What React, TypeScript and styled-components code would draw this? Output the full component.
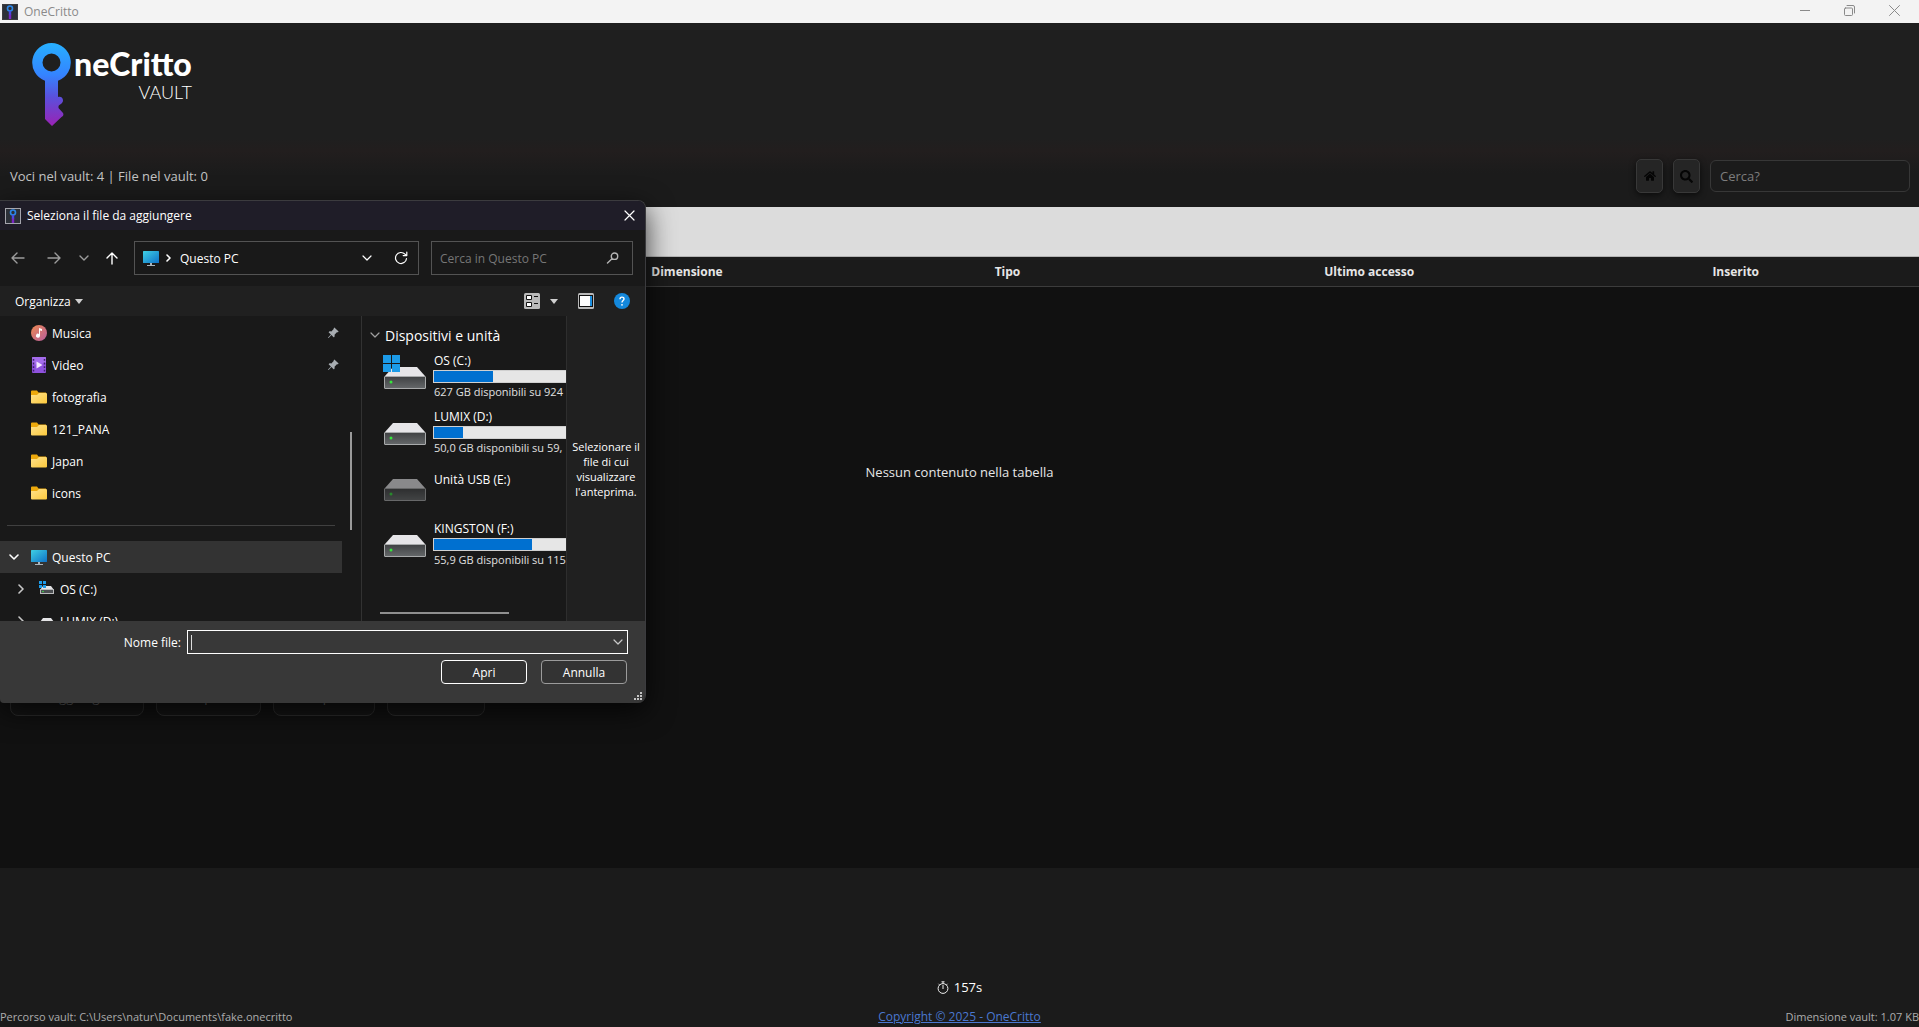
import React, { useId } from "react";
import styled, { createGlobalStyle } from "styled-components";
import { FaHome, FaSearch } from "react-icons/fa";
import { BsPinAngleFill } from "react-icons/bs";

const GlobalStyle = createGlobalStyle`
  *, *::before, *::after { box-sizing: border-box; }
  body {
    margin: 0;
    background: #1b1b1b;
    color: #fff;
    font-family: "Open Sans", "Noto Sans", sans-serif;
    font-size: 12px;
  }
  button, input { font: inherit; color: inherit; }
  button { padding: 0; border: 0; background: none; cursor: pointer; }
  svg { display: block; flex: none; }
`;

/* ---------- main window ---------- */

const Window = styled.div`
  position: relative;
  display: flex;
  flex-direction: column;
  min-height: 100vh;
  overflow: hidden;
`;

const TitleBar = styled.div`
  display: flex;
  align-items: center;
  justify-content: space-between;
  height: 23px;
  padding: 0 2px;
  background: #f3f3f3;
  color: #8a8a8a;
`;

const AppName = styled.div`
  display: flex;
  align-items: center;
  gap: 6px;
`;

const WindowControls = styled.div`
  display: flex;
  align-self: flex-start;
`;

const WindowButton = styled.button`
  display: grid;
  place-items: center;
  width: 45px;
  height: 21px;
`;

const Header = styled.header`
  display: flex;
  flex-direction: column;
  justify-content: space-between;
  height: 184px;
  padding: 19px 9px 14px 10px;
  background: linear-gradient(#1f1f1f 0 115px, #221e1e 128px, #1b1b1b 150px);
`;

const Brand = styled.div`
  display: flex;
  gap: 3px;
  padding-left: 22px;
`;

const BrandText = styled.div`
  display: flex;
  flex-direction: column;
  align-items: flex-end;
  padding-top: 4px;
  font-family: Lato, sans-serif;
`;

const BrandName = styled.span`
  font-size: 32px;
  font-weight: 900;
  line-height: 36px;
`;

const BrandSub = styled.span`
  font-size: 18px;
  font-weight: 300;
  line-height: 20px;
`;

const Toolbar = styled.div`
  display: flex;
  align-items: center;
  justify-content: space-between;
`;

const Counter = styled.span`
  color: #c4c4c4;
  font-size: 13px;
`;

const Tools = styled.div`
  display: flex;
  align-items: center;
  gap: 10px;
`;

const ToolButton = styled.button`
  display: grid;
  place-items: center;
  width: 27px;
  height: 34px;
  border: 1px solid #383838;
  border-radius: 5px;
  background: #252525;
  color: #050505;
  box-shadow: 0 2px 6px rgba(0, 0, 0, 0.6);
`;

const SearchBox = styled.input`
  width: 200px;
  height: 32px;
  padding: 0 9px;
  border: 1px solid #373737;
  border-radius: 6px;
  background: #1b1b1b;
  font-size: 13px;
  outline: 0;
  &::placeholder { color: #7d7d7d; opacity: 1; }
`;

const Strip = styled.div`
  height: 50px;
  background: #dcdcdc;
  border-bottom: 1px solid #b4b4b4;
`;

const Main = styled.main`
  flex: 1;
  background: #111;
`;

const Table = styled.table`
  width: 100%;
  table-layout: fixed;
  border-collapse: collapse;
  color: #e6e6e6;
  font-size: 13px;
`;

const Column = styled.col<{ $share: number }>`
  width: ${(p) => p.$share}%;
`;

const HeadCell = styled.th`
  height: 29px;
  padding: 0;
  background: #1b1b1b;
  border-bottom: 1px solid #3c3c3c;
  font-size: 12px;
  font-weight: 700;
  text-align: center;
`;

const EmptyCell = styled.td`
  height: 372px;
  padding: 0;
  text-align: center;
`;

const Actions = styled.div`
  display: flex;
  gap: 12px;
  padding: 22px 10px;
`;

const ActionButton = styled.button<{ $width: number }>`
  width: ${(p) => p.$width}px;
  height: 36px;
  padding-bottom: 2px;
  border: 1px solid #2c2c2c;
  border-radius: 8px;
  background: #151515;
  color: #666;
  font-size: 13px;
`;

const Footer = styled.footer`
  display: flex;
  flex-direction: column;
  justify-content: flex-end;
  height: 159px;
  gap: 12px;
  background: #1b1b1b;
`;

const Timer = styled.div`
  display: flex;
  align-items: center;
  justify-content: center;
  gap: 5px;
  font-size: 13px;
  line-height: 18px;
`;

const StatusRow = styled.div`
  display: grid;
  grid-template-columns: 1fr auto 1fr;
  padding-bottom: 1px;
  color: #adadad;
  font-size: 11px;
  line-height: 18px;
`;

const StatusEnd = styled.span`
  text-align: right;
`;

const Copyright = styled.a`
  color: #4a78d0;
  font-size: 12px;
  text-decoration: underline;
`;

/* ---------- file dialog ---------- */

const Dialog = styled.section`
  position: absolute;
  top: 200px;
  left: 0;
  width: 646px;
  border: 1px solid #3b3b3e;
  border-left: 0;
  border-bottom: 0;
  border-radius: 0 8px 8px 4px;
  background: #191919;
  box-shadow: 0 8px 28px rgba(0, 0, 0, 0.75);
  overflow: hidden;
`;

const DialogTitle = styled.div`
  display: flex;
  align-items: center;
  justify-content: space-between;
  height: 29px;
  padding: 0 10px 0 5px;
  background: #1f1d28;
`;

const DialogName = styled.h1`
  display: flex;
  align-items: center;
  gap: 6px;
  margin: 0;
  font-size: 12px;
  font-weight: 400;
`;

const NavBar = styled.div`
  display: flex;
  align-items: center;
  height: 56px;
  padding: 0 12px 0 11px;
`;

const NavButtons = styled.div`
  display: grid;
  grid-template-columns: 36px 32px 27px 12px;
  align-items: center;
  justify-items: start;
  margin-right: 16px;
`;

const Address = styled.div`
  display: flex;
  align-items: center;
  width: 285px;
  height: 34px;
  margin-right: 12px;
  padding: 0 10px 0 8px;
  gap: 6px;
  border: 1px solid #535353;
`;

const AddressText = styled.span`
  flex: 1;
  padding-left: 3px;
`;

const AddressTools = styled.div`
  display: flex;
  align-items: center;
  gap: 22px;
`;

const FindBox = styled.label`
  display: flex;
  flex: 1;
  align-items: center;
  height: 34px;
  padding: 0 13px 0 8px;
  border: 1px solid #535353;
`;

const FindInput = styled.input`
  flex: 1;
  min-width: 0;
  padding: 0;
  border: 0;
  outline: 0;
  background: none;
  &::placeholder { color: #767676; opacity: 1; }
`;

const CommandBar = styled.div`
  display: flex;
  align-items: center;
  justify-content: space-between;
  height: 30px;
  padding: 0 15px;
  background: #202020;
`;

const CommandGroup = styled.div`
  display: flex;
  align-items: center;
  gap: 20px;
`;

const MenuButton = styled.button<{ $gap: number }>`
  display: flex;
  align-items: center;
  gap: ${(p) => p.$gap}px;
`;

const Panes = styled.div`
  display: grid;
  grid-template-columns: 361px 1fr 79px;
  height: 305px;
`;

const Sidebar = styled.nav`
  position: relative;
  padding-top: 1px;
  overflow: hidden;
`;

const TreeRow = styled.div<{ $level?: number; $selected?: boolean }>`
  display: flex;
  align-items: center;
  width: 342px;
  height: 32px;
  padding: 0 1px 0 ${(p) => (p.$level ? 14 : 8)}px;
  background: ${(p) => (p.$selected ? "#333" : "none")};
`;

const Expander = styled.span<{ $level?: number }>`
  display: grid;
  place-items: center;
  width: ${(p) => (p.$level ? 14 : 12)}px;
  margin-right: 11px;
`;

const TreeLabel = styled.span`
  flex: 1;
  padding-left: 5px;
`;

const Divider = styled.hr`
  width: 328px;
  margin: 16px 7px 15px;
  border: 0;
  border-top: 1px solid #404040;
`;

const TreeThumb = styled.div`
  position: absolute;
  top: 116px;
  right: 9px;
  width: 2px;
  height: 98px;
  background: #9a9a9a;
`;

const PinSlot = styled.span`
  margin-right: 2px;
  color: #a8adb2;
`;

const Drives = styled.div`
  display: flex;
  flex-direction: column;
  min-width: 0;
  padding: 4px 0 7px 8px;
  border-left: 1px solid #323232;
  overflow: hidden;
`;

const GroupTitle = styled.h2`
  display: flex;
  align-items: center;
  gap: 5px;
  height: 28px;
  margin: 0;
  padding-top: 2px;
  font-size: 14px;
  font-weight: 400;
  white-space: nowrap;
`;

const DriveRow = styled.div`
  display: flex;
  flex: none;
  align-items: center;
  gap: 6px;
  height: 56px;
  padding-left: 13px;
`;

const DriveInfo = styled.div`
  display: flex;
  flex: 1;
  flex-direction: column;
  min-width: 0;
  line-height: 16px;
  white-space: nowrap;
`;

const DriveName = styled.span<{ $alone?: boolean }>`
  padding-left: 1px;
  padding-bottom: ${(p) => (p.$alone ? 16 : 1)}px;
`;

const DriveSpace = styled.span`
  padding: 1px 0 0 1px;
  color: #e0e0e0;
  font-size: 11px;
`;

const Meter = styled.div`
  height: 13px;
  border: 1px solid #d0d0d0;
  border-right: 0;
  background: #e6e6e6;
`;

const MeterFill = styled.div`
  height: 100%;
  background: #0070d0;
`;

const DriveThumb = styled.div`
  width: 129px;
  height: 2px;
  margin: auto 0 0 10px;
  background: #8f8f8f;
`;

const Preview = styled.p`
  display: flex;
  align-items: center;
  margin: 0;
  border-left: 1px solid #2e2e2e;
  background: #202020;
  font-size: 11px;
  line-height: 15px;
  text-align: center;
`;

const DialogFooter = styled.div`
  position: relative;
  display: flex;
  flex-direction: column;
  gap: 6px;
  height: 82px;
  padding: 9px 17px 0;
  background: #383838;
`;

const FileRow = styled.div`
  display: flex;
  align-items: center;
  justify-content: flex-end;
  gap: 6px;
`;

const ComboBox = styled.div`
  display: flex;
  align-items: center;
  width: 441px;
  height: 24px;
  padding: 0 4px 0 3px;
  border: 1px solid #fff;
`;

const Caret = styled.span`
  width: 1px;
  height: 15px;
  background: #ddd;
`;

const ButtonRow = styled.div`
  display: flex;
  justify-content: flex-end;
  gap: 14px;
  padding-right: 1px;
`;

const DialogButton = styled.button<{ $primary?: boolean }>`
  width: 86px;
  height: 24px;
  border: 1px solid ${(p) => (p.$primary ? "#fff" : "#9b9b9b")};
  border-radius: 4px;
  background: #333;
`;

const Grip = styled.svg`
  position: absolute;
  right: 3px;
  bottom: 3px;
`;

/* ---------- drawings ---------- */

const KeyLogo = ({ width = 39, height = 84 }: { width?: number; height?: number }) => {
  const id = useId();
  return (
    <svg width={width} height={height} viewBox="0 0 39 84" aria-hidden="true">
      <defs>
        <linearGradient id={id} x1="0" y1="0" x2="0" y2="1">
          <stop offset="0" stopColor="#27b0ff" />
          <stop offset="0.38" stopColor="#3484ff" />
          <stop offset="0.65" stopColor="#5a50dc" />
          <stop offset="1" stopColor="#9a22b4" />
        </linearGradient>
      </defs>
      <path
        fill={`url(#${id})`}
        fillRule="evenodd"
        d="M19.500 1a19.500 19.500 0 0 1 6.500 37.800V55c3-1 5 1 5 3.500 0 3-3 3.500-4.500 5.500v2l4.500 5c1 2 0 3-1.500 4L20 84l-7-7V38.800A19.500 19.500 0 0 1 19.500 1zm0 10.500a9 9 0 1 0 0 18 9 9 0 0 0 0-18z"
      />
    </svg>
  );
};

const AppIcon = ({ framed }: { framed?: boolean }) => (
  <svg width="16" height="16" viewBox="0 0 16 16" aria-hidden="true">
    <rect x="0.500" y="0.500" width="15" height="15" fill="#2c3038" stroke={framed ? "#a5a5ad" : "#3c3c40"} />
    <circle cx="8" cy="4.500" r="2.500" fill="none" stroke="#2b86e8" strokeWidth="1.600" />
    <path d="M8 7v4" stroke="#4a4ce0" strokeWidth="2.400" />
    <path d="M8 10.500V15" stroke="#7a26c4" strokeWidth="2.400" />
  </svg>
);

type StrokeProps = { d: string; w: number; h: number; color?: string; weight?: number };
const Stroke = ({ d, w, h, color = "#fff", weight = 1.4 }: StrokeProps) => (
  <svg width={w} height={h} viewBox={`0 0 ${w} ${h}`} fill="none" stroke={color} strokeWidth={weight} strokeLinecap="round" strokeLinejoin="round" aria-hidden="true">
    <path d={d} />
  </svg>
);

const Triangle = () => (
  <svg width="8" height="5" viewBox="0 0 8 5" aria-hidden="true">
    <path d="M0 0h8L4 5z" fill="#d0d0d0" />
  </svg>
);

const Monitor = () => {
  const id = useId();
  return (
    <svg width="16" height="16" viewBox="0 0 16 16" aria-hidden="true">
      <defs>
        <linearGradient id={id} x1="0" y1="0" x2="1" y2="1">
          <stop offset="0" stopColor="#3fd0e4" />
          <stop offset="1" stopColor="#0f72c8" />
        </linearGradient>
      </defs>
      <rect y="1" width="16" height="12" rx="0.600" fill={`url(#${id})`} />
      <path d="M7 13h2v2h3v1H4v-1h3z" fill="#aab4bc" />
    </svg>
  );
};

const Folder = () => {
  const id = useId();
  return (
    <svg width="16" height="16" viewBox="0 0 16 16" aria-hidden="true">
      <defs>
        <linearGradient id={id} x1="0" y1="0" x2="1" y2="1">
          <stop offset="0" stopColor="#ffe28c" />
          <stop offset="1" stopColor="#fcc93c" />
        </linearGradient>
      </defs>
      <path d="M0 2.500a1 1 0 0 1 1-1h5l1.500 2H15v4H0z" fill="#eda90c" />
      <path d="M0 6h6l2-2h7a1 1 0 0 1 1 1v8.500a1 1 0 0 1-1 1H1a1 1 0 0 1-1-1z" fill={`url(#${id})`} />
    </svg>
  );
};

const Music = () => {
  const id = useId();
  return (
    <svg width="16" height="16" viewBox="0 0 16 16" aria-hidden="true">
      <defs>
        <linearGradient id={id} x1="0" y1="0" x2="1" y2="1">
          <stop offset="0" stopColor="#ee8a52" />
          <stop offset="1" stopColor="#b65c9c" />
        </linearGradient>
      </defs>
      <circle cx="8" cy="8" r="8" fill={`url(#${id})`} />
      <path d="M8 3l3 1v2L9 5.500v5.300A2 2 0 1 1 8 9z" fill="#fff" />
    </svg>
  );
};

const Video = () => (
  <svg width="16" height="16" viewBox="0 0 16 16" aria-hidden="true">
    <rect x="1" width="14" height="16" rx="1" fill="#8f52de" />
    <path d="M1 1a1 1 0 0 1 1-1h12a1 1 0 0 1 1 1v5L1 8z" fill="#a46cec" />
    <path d="M2.500 2v13M13.500 2v13" stroke="#40206c" strokeWidth="1.500" strokeDasharray="1.800 1.800" />
    <path d="M5.500 4.500v7l6-3.500z" fill="#f3e8ff" />
  </svg>
);

const WindowsTiles = ({ size, top = 0 }: { size: number; top?: number }) => (
  <path
    d={`M0 ${top}h${size}v${size}H0z M${size + 1} ${top}h${size}v${size}h-${size}z M0 ${top + size + 1}h${size}v${size}H0z M${size + 1} ${top + size + 1}h${size}v${size}h-${size}z`}
    fill="#1c9be8"
  />
);

const SmallDrive = ({ system }: { system?: boolean }) => (
  <svg width="16" height="16" viewBox="0 0 16 16" aria-hidden="true">
    <path d="M4 5h8l3 4H1z" fill="#e4e4e6" />
    <rect x="1.500" y="8.500" width="13" height="4" fill="#4a4d50" stroke="#b9babb" />
    <circle cx="4" cy="10.500" r="0.800" fill="#3fe04a" />
    {system && <WindowsTiles size={3} />}
  </svg>
);

const BigDrive = ({ system, dim }: { system?: boolean; dim?: boolean }) => {
  const id = useId();
  return (
    <svg width="44" height="44" viewBox="0 0 44 44" aria-hidden="true">
      <defs>
        <linearGradient id={id} x1="0" y1="0" x2="0" y2="1">
          <stop offset="0" stopColor="#3f4143" />
          <stop offset="1" stopColor="#65686a" />
        </linearGradient>
      </defs>
      <g opacity={dim ? 0.55 : 1}>
        <path d="M10 13h24l8 9H2z" fill="#e6e5e8" />
        <rect x="1.500" y="22.500" width="41" height="12" rx="0.500" fill={`url(#${id})`} stroke="#a8aaab" />
        <circle cx="8" cy="28" r="1.500" fill="#36e63c" />
      </g>
      {system && <WindowsTiles size={8} top={1} />}
    </svg>
  );
};

const Stopwatch = () => (
  <svg width="12" height="13" viewBox="0 0 12 13" fill="none" stroke="#eee" aria-hidden="true">
    <circle cx="6" cy="7.500" r="4.900" />
    <path d="M6 4v4M6 2.500V1M4.500 0.800h3M1.500 2.800l1 1M10.500 2.800l-1 1" />
  </svg>
);

const CHEVRON_DOWN = "M1 1l4 4 4-4";
const CHEVRON_RIGHT = "M1 1l4 4-4 4";

/* ---------- data ---------- */

const columns = [
  { name: "Nome", share: 28.4 },
  { name: "Dimensione", share: 14.8 },
  { name: "Tipo", share: 18.6 },
  { name: "Ultimo accesso", share: 19.1 },
  { name: "Inserito", share: 19.1 },
];

const places = [
  { name: "Musica", icon: <Music />, pinned: true },
  { name: "Video", icon: <Video />, pinned: true },
  { name: "fotografia", icon: <Folder /> },
  { name: "121_PANA", icon: <Folder /> },
  { name: "Japan", icon: <Folder /> },
  { name: "icons", icon: <Folder /> },
];

const drives = [
  { name: "OS (C:)", space: "627 GB disponibili su 924", used: 45, system: true },
  { name: "LUMIX (D:)", space: "50,0 GB disponibili su 59,", used: 22 },
  { name: "Unità USB (E:)" },
  { name: "KINGSTON (F:)", space: "55,9 GB disponibili su 115", used: 74 },
];

const FileDialog = () => (
  <Dialog role="dialog" aria-labelledby="dialog-name">
    <DialogTitle>
      <DialogName id="dialog-name">
        <AppIcon framed />
        Seleziona il file da aggiungere
      </DialogName>
      <button aria-label="Chiudi finestra">
        <Stroke w={11} h={11} d="M1 1l9 9M10 1l-9 9" weight={1.2} />
      </button>
    </DialogTitle>
    <NavBar>
      <NavButtons>
        <button aria-label="Indietro"><Stroke w={14} h={12} d="M13 6H1M6 1L1 6l5 5" color="#9c9c9c" /></button>
        <button aria-label="Avanti"><Stroke w={14} h={12} d="M1 6h12M8 1l5 5-5 5" color="#9c9c9c" /></button>
        <button aria-label="Recenti"><Stroke w={10} h={6} d={CHEVRON_DOWN} color="#9c9c9c" /></button>
        <button aria-label="Su"><Stroke w={12} h={13} d="M6 12V1M1 6l5-5 5 5" /></button>
      </NavButtons>
      <Address>
        <Monitor />
        <Stroke w={6} h={10} d="M2 2l3 3-3 3" weight={1.6} />
        <AddressText>Questo PC</AddressText>
        <AddressTools>
          <button aria-label="Cronologia"><Stroke w={10} h={6} d={CHEVRON_DOWN} weight={1.2} /></button>
          <button aria-label="Aggiorna">
            <Stroke w={14} h={14} d="M12.500 7.500A5.500 5.500 0 1 1 11 3.200L12.500 4.500M12.800 1v3.600H9.200" weight={1.2} />
          </button>
        </AddressTools>
      </Address>
      <FindBox>
        <FindInput placeholder="Cerca in Questo PC" aria-label="Cerca in Questo PC" />
        <Stroke w={13} h={12} d="M8.500 1a3.200 3.200 0 1 1 0 6.400 3.200 3.200 0 0 1 0-6.400zM6 6.700L1.500 11" color="#b4b4b4" />
      </FindBox>
    </NavBar>
    <CommandBar>
      <MenuButton $gap={4}>Organizza <Triangle /></MenuButton>
      <CommandGroup>
        <MenuButton $gap={10} aria-label="Visualizzazione">
          <svg width="16" height="16" viewBox="0 0 16 16" aria-hidden="true">
            <rect width="16" height="16" rx="1.500" fill="#b9b9b9" />
            <path d="M2.500 2.500h5v4h-5zM2.500 9.500h5v4h-5z" fill="#fff" stroke="#111" />
            <path d="M10 3.500h4M10 10.500h4" stroke="#111" />
          </svg>
          <Triangle />
        </MenuButton>
        <button aria-label="Riquadro di anteprima">
          <svg width="16" height="16" viewBox="0 0 16 16" aria-hidden="true">
            <rect width="16" height="16" rx="1.500" fill="#b9b9b9" />
            <rect x="1.500" y="2.500" width="13" height="11" fill="#fff" stroke="#111" />
            <rect x="12" y="3" width="2" height="10" fill="#1c8fe0" />
          </svg>
        </button>
        <button aria-label="Guida">
          <svg width="16" height="16" viewBox="0 0 16 16" aria-hidden="true">
            <circle cx="8" cy="8" r="8" fill="#1488dc" />
            <path d="M6 6.200C6 3.400 10 3.500 10 6c0 1.500-2 1.700-2 3.500" fill="none" stroke="#fff" strokeWidth="1.400" />
            <circle cx="8" cy="11.800" r="0.900" fill="#fff" />
          </svg>
        </button>
      </CommandGroup>
    </CommandBar>
    <Panes>
      <Sidebar aria-label="Posizioni">
        {places.map((p) => (
          <TreeRow key={p.name}>
            <Expander />
            {p.icon}
            <TreeLabel>{p.name}</TreeLabel>
            {p.pinned && <PinSlot><BsPinAngleFill size={12} /></PinSlot>}
          </TreeRow>
        ))}
        <Divider />
        <TreeRow $selected>
          <Expander><Stroke w={10} h={6} d={CHEVRON_DOWN} weight={1.6} /></Expander>
          <Monitor />
          <TreeLabel>Questo PC</TreeLabel>
        </TreeRow>
        {["OS (C:)", "LUMIX (D:)"].map((name, i) => (
          <TreeRow key={name} $level={1}>
            <Expander $level={1}><Stroke w={6} h={10} d={CHEVRON_RIGHT} color="#c8c8c8" weight={1.6} /></Expander>
            <SmallDrive system={i === 0} />
            <TreeLabel>{name}</TreeLabel>
          </TreeRow>
        ))}
        <TreeThumb />
      </Sidebar>
      <Drives>
        <GroupTitle>
          <Stroke w={10} h={6} d={CHEVRON_DOWN} color="#a0a0a0" weight={1.2} />
          Dispositivi e unità
        </GroupTitle>
        {drives.map((d) => (
          <DriveRow key={d.name}>
            <BigDrive system={d.system} dim={!d.space} />
            <DriveInfo>
              <DriveName $alone={!d.space}>{d.name}</DriveName>
              {d.space && (
                <>
                  <Meter><MeterFill style={{ width: `${d.used}%` }} /></Meter>
                  <DriveSpace>{d.space}</DriveSpace>
                </>
              )}
            </DriveInfo>
          </DriveRow>
        ))}
        <DriveThumb />
      </Drives>
      <Preview>Selezionare il file di cui visualizzare l'anteprima.</Preview>
    </Panes>
    <DialogFooter>
      <FileRow>
        <label htmlFor="file-name">Nome file:</label>
        <ComboBox>
          <Caret />
          <FindInput id="file-name" />
          <button aria-label="Nomi recenti"><Stroke w={10} h={6} d={CHEVRON_DOWN} color="#c8c8c8" weight={1.2} /></button>
        </ComboBox>
      </FileRow>
      <ButtonRow>
        <DialogButton $primary>Apri</DialogButton>
        <DialogButton>Annulla</DialogButton>
      </ButtonRow>
      <Grip width="8" height="8" viewBox="0 0 8 8" aria-hidden="true">
        <path d="M6 0h2v2H6zM3 3h2v2H3zM6 3h2v2H6zM0 6h2v2H0zM3 6h2v2H3zM6 6h2v2H6z" fill="#c4c4c4" />
      </Grip>
    </DialogFooter>
  </Dialog>
);

export default function App() {
  return (
    <Window>
      <GlobalStyle />
      <TitleBar>
        <AppName><AppIcon />OneCritto</AppName>
        <WindowControls>
          <WindowButton aria-label="Riduci a icona"><Stroke w={10} h={11} d="M0 5.500h10" color="#8a8a8a" weight={1} /></WindowButton>
          <WindowButton aria-label="Ripristina">
            <Stroke w={11} h={11} d="M1.500 3h6a1 1 0 0 1 1 1v5.500a1 1 0 0 1-1 1h-6a1 1 0 0 1-1-1V4a1 1 0 0 1 1-1zM3 0.500h6a1.500 1.500 0 0 1 1.500 1.500v6" color="#8a8a8a" weight={1} />
          </WindowButton>
          <WindowButton aria-label="Chiudi"><Stroke w={11} h={11} d="M0.500 0.500l10 10M10.500 0.500l-10 10" color="#8a8a8a" weight={1} /></WindowButton>
        </WindowControls>
      </TitleBar>
      <Header>
        <Brand>
          <KeyLogo />
          <BrandText>
            <BrandName>neCritto</BrandName>
            <BrandSub>VAULT</BrandSub>
          </BrandText>
        </Brand>
        <Toolbar>
          <Counter>Voci nel vault: 4 | File nel vault: 0</Counter>
          <Tools>
            <ToolButton aria-label="Home"><FaHome size={12} /></ToolButton>
            <ToolButton aria-label="Cerca"><FaSearch size={13} /></ToolButton>
            <SearchBox placeholder="Cerca?" aria-label="Cerca nel vault" />
          </Tools>
        </Toolbar>
      </Header>
      <Strip />
      <Main>
        <Table>
          <colgroup>
            {columns.map((c) => <Column key={c.name} $share={c.share} />)}
          </colgroup>
          <thead>
            <tr>{columns.map((c) => <HeadCell key={c.name}>{c.name}</HeadCell>)}</tr>
          </thead>
          <tbody>
            <tr><EmptyCell colSpan={5}>Nessun contenuto nella tabella</EmptyCell></tr>
          </tbody>
        </Table>
        <Actions>
          <ActionButton $width={134}>Aggiungi</ActionButton>
          <ActionButton $width={105}>Apri</ActionButton>
          <ActionButton $width={102}>Copia</ActionButton>
          <ActionButton $width={98}>Elimina</ActionButton>
        </Actions>
      </Main>
      <Footer>
        <Timer><Stopwatch />157s</Timer>
        <StatusRow>
          <span>Percorso vault: C:\Users\natur\Documents\fake.onecritto</span>
          <Copyright href="#">Copyright © 2025 - OneCritto</Copyright>
          <StatusEnd>Dimensione vault: 1.07 KB</StatusEnd>
        </StatusRow>
      </Footer>
      <FileDialog />
    </Window>
  );
}
